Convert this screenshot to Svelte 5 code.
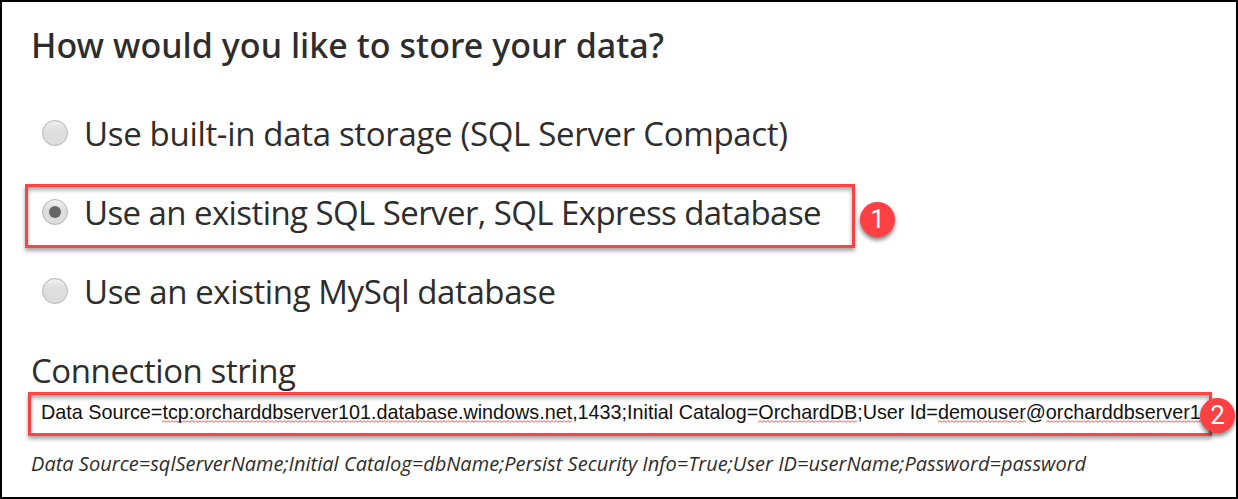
<script>
  const options = [
    { label: 'Use built-in data storage (SQL Server Compact)', cls: 'compact' },
    { label: 'Use an existing SQL Server, SQL Express database', cls: 'sql', checked: true },
    { label: 'Use an existing MySql database', cls: 'mysql' }
  ];
  const parts = [
    { t: 'Data Source=' },
    { t: 'tcp:orcharddbserver101.database.windows.net', s: true },
    { t: ',1433;Initial Catalog=' },
    { t: 'OrchardDB', s: true },
    { t: ';User Id=' },
    { t: 'demouser', s: true },
    { t: '@' },
    { t: 'orcharddbserver1', s: true }
  ];
</script>

<main class="page">
  <h1>How would you like to store your data?</h1>
  <div class="options" role="radiogroup">
    {#each options as o}
      <div class="option" role="radio" aria-checked={!!o.checked} tabindex="0">
        <span class="radio" class:checked={o.checked}></span>
        <span class="label {o.cls}">{o.label}</span>
        {#if o.checked}
          <span class="highlight"></span>
          <span class="badge one">1</span>
        {/if}
      </div>
    {/each}
  </div>
  <div class="field-label">Connection string</div>
  <div class="field">
    <div class="value">{#each parts as p}<span class:misspelled={p.s}>{p.t}</span>{/each}</div>
    <span class="badge two">2</span>
  </div>
  <p class="hint">Data Source=sqlServerName;Initial Catalog=dbName;Persist Security Info=True;User ID=userName;Password=password</p>
</main>

<style>
  .page {
    box-sizing: border-box;
    width: 1238px;
    height: 499px;
    border: 2px solid #000;
    padding-left: 29px;
    background: #fff;
    color: #2d2d2d;
    font-family: "Open Sans", "Noto Sans", sans-serif;
    white-space: nowrap;
    overflow: hidden;
  }
  h1 {
    margin: 0 0 6px;
    font-family: "Noto Sans", "Open Sans", sans-serif;
    font-size: 34px;
    font-weight: 500;
    line-height: 86px;
    letter-spacing: 0.04px;
  }
  .options {
    display: flex;
    flex-direction: column;
    gap: 1px;
  }
  .option {
    position: relative;
    display: flex;
    align-items: center;
    gap: 16px;
    height: 78px;
    padding-left: 11px;
    font-size: 33px;
    line-height: 44px;
  }
  .label { padding-top: 2px; }
  .radio {
    box-sizing: border-box;
    width: 26px;
    height: 26px;
    display: grid;
    place-items: center;
    border: 1px solid #b4b4b4;
    border-radius: 50%;
    background: linear-gradient(#eee, #dedede 40%, #dcdcdc);
  }
  .checked::after {
    content: "";
    width: 12.5px;
    height: 12.5px;
    border-radius: 50%;
    background: #666;
  }
  .compact { letter-spacing: -0.32px; }
  .sql { letter-spacing: -0.58px; }
  .mysql { letter-spacing: -0.4px; }
  .highlight {
    position: absolute;
    left: -6px;
    top: 11px;
    box-sizing: border-box;
    width: 830px;
    height: 64px;
    border: 3px solid #fb4444;
    box-shadow: 0 3px 4px rgba(0, 0, 0, 0.35), inset 0 3px 4px rgba(0, 0, 0, 0.35);
  }
  .badge {
    position: absolute;
    width: 35px;
    height: 35px;
    border-radius: 50%;
    background: #fd4044;
    box-shadow: 0 3px 4px rgba(0, 0, 0, 0.5);
    color: #fff;
    font: 400 26px/35px Roboto, sans-serif;
    text-align: center;
  }
  .one { left: 829px; top: 29px; }
  .two { left: 1169px; top: 3px; }
  .field-label {
    padding-top: 19px;
    margin-bottom: -1px;
    font-size: 33px;
    line-height: 44px;
    letter-spacing: -0.42px;
  }
  .field {
    position: relative;
    box-sizing: border-box;
    width: 1184px;
    height: 44px;
    margin: 0 0 0 -3px;
    border: 3px solid #fb4444;
    box-shadow: 0 3px 4px rgba(0, 0, 0, 0.35), inset 0 3px 4px rgba(0, 0, 0, 0.35);
    padding-left: 10px;
  }
  .value {
    color: #111;
    font: 19.8px/34px "Liberation Sans", Arial, sans-serif;
    letter-spacing: -0.01px;
  }
  .misspelled {
    background: url("data:image/svg+xml,%3Csvg xmlns='http://www.w3.org/2000/svg' width='4' height='3'%3E%3Cpath d='M0 2.3L2 .7L4 2.3' fill='none' stroke='%23ff5050' stroke-width='1'/%3E%3C/svg%3E") left bottom repeat-x;
  }
  .hint {
    margin: 13px 0 0;
    font-size: 20px;
    font-style: italic;
    line-height: 30px;
    letter-spacing: 0.02px;
  }
</style>
